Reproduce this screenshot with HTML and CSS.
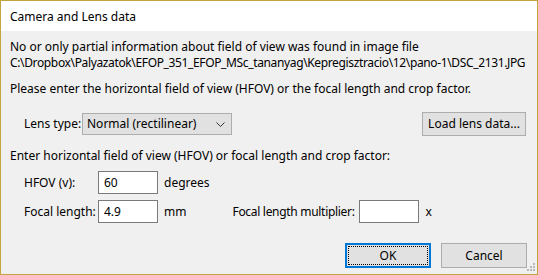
FILE: index.html
```html
<!DOCTYPE html>
<html lang="en">
<head>
  <meta charset="UTF-8" />
  <title>Camera and Lens data</title>
  <link rel="stylesheet" href="styles.css">
</head>
<body>
  <div class="window">
    <div class="titlebar">Camera and Lens data</div>

    <div class="content">
      <p class="info">No or only partial information about field of view was found in image file</p>
      <p class="path">C:\Dropbox\Palyazatok\EFOP_351_EFOP_MSc_tananyag\Kepregisztracio\12\pano-1\DSC_2131.JPG</p>

      <p class="prompt">Please enter the horizontal field of view (HFOV) or the focal length and crop factor.</p>

      <div class="lens-row">
        <span class="lens-label">Lens type:</span>
        <div class="combo">
          <span>Normal (rectilinear)</span>
          <svg class="chevron" width="9" height="5" viewBox="0 0 9 5"><path d="M0.5 0.5 L4.5 4.5 L8.5 0.5" fill="none" stroke="#333" stroke-width="1"/></svg>
        </div>
        <button class="btn load-btn">Load lens data...</button>
      </div>

      <p class="sub">Enter horizontal field of view (HFOV) or focal length and crop factor:</p>

      <div class="field-row">
        <span class="field-label">HFOV (v):</span>
        <div class="edit">60</div>
        <span class="unit">degrees</span>
      </div>

      <div class="field-row">
        <span class="field-label">Focal length:</span>
        <div class="edit">4.9</div>
        <span class="unit">mm</span>
        <span class="mult-label">Focal length multiplier:</span>
        <div class="edit"></div>
        <span class="unit">x</span>
      </div>

      <div class="buttons">
        <button class="btn ok-btn"><span class="focus">OK</span></button>
        <button class="btn">Cancel</button>
      </div>

      <div class="grip">
        <svg width="8" height="8" viewBox="0 0 8 8">
          <rect x="6" y="0" width="2" height="2" fill="#b8b8b8"/>
          <rect x="3" y="3" width="2" height="2" fill="#b8b8b8"/>
          <rect x="6" y="3" width="2" height="2" fill="#b8b8b8"/>
          <rect x="0" y="6" width="2" height="2" fill="#b8b8b8"/>
          <rect x="3" y="6" width="2" height="2" fill="#b8b8b8"/>
          <rect x="6" y="6" width="2" height="2" fill="#b8b8b8"/>
        </svg>
      </div>
    </div>
  </div>
</body>
</html>
```

FILE: styles.css
```css
:root {
  --frame: #c4a43e;
  --face: #f0f0f0;
  --btn: #e1e1e1;
  --btn-border: #adadad;
  --edit-border: #7a7a7a;
  --focus: #0078d7;
}

* {
  box-sizing: border-box;
}

body {
  margin: 0;
  font-family: "Noto Sans", "Open Sans", sans-serif;
  font-size: 12px;
  color: #000;
  background: var(--face);
}

.window {
  width: 538px;
  height: 275px;
  border: 1px solid var(--frame);
  display: flex;
  flex-direction: column;
  position: relative;
}

.titlebar {
  height: 30px;
  line-height: 31px;
  padding-left: 9px;
  background: #fff;
}

.content {
  flex: 1;
  background: var(--face);
  padding: 8px 10px 0 9px;
  line-height: 14px;
}

p {
  margin: 0;
}

.info,
.path {
  line-height: 16px;
}

.path {
  white-space: nowrap;
  letter-spacing: -0.36px;
  margin-bottom: 11px;
}

.lens-row {
  display: flex;
  align-items: center;
  margin-top: 16px;
  padding-left: 14px;
}

.lens-label {
  width: 58px;
}

.combo {
  width: 150px;
  height: 22px;
  border: 1px solid var(--btn-border);
  background: var(--btn);
  display: flex;
  align-items: center;
  justify-content: space-between;
  padding: 0 6px 0 4px;
}

.btn {
  font: inherit;
  color: #000;
  background: var(--btn);
  border: 1px solid var(--btn-border);
  height: 24px;
  padding: 0;
}

.load-btn {
  width: 104px;
  margin-left: auto;
  margin-right: 1px;
}

.sub {
  margin-top: 13px;
}

.field-row {
  display: flex;
  align-items: center;
  padding-left: 14px;
  margin-top: 6px;
}

.sub + .field-row {
  margin-top: 8px;
}

.field-label {
  width: 74px;
}

.edit {
  width: 60px;
  height: 23px;
  background: #fff;
  border: 1px solid var(--edit-border);
  padding: 0 5px;
  line-height: 21px;
}

.unit {
  margin-left: 6px;
}

.mult-label {
  width: 127px;
  margin-left: 46px;
  white-space: nowrap;
  letter-spacing: -0.3px;
}

.buttons {
  display: flex;
  justify-content: flex-end;
  gap: 10px;
  margin-top: 20px;
}

.buttons .btn {
  width: 86px;
  height: 25px;
}

.ok-btn {
  border: 2px solid var(--focus);
  padding: 1px;
}

.ok-btn .focus {
  display: flex;
  align-items: center;
  justify-content: center;
  height: 100%;
  border: 1px dotted #000;
}

.grip {
  position: absolute;
  right: 2px;
  bottom: 3px;
  line-height: 0;
}
```
